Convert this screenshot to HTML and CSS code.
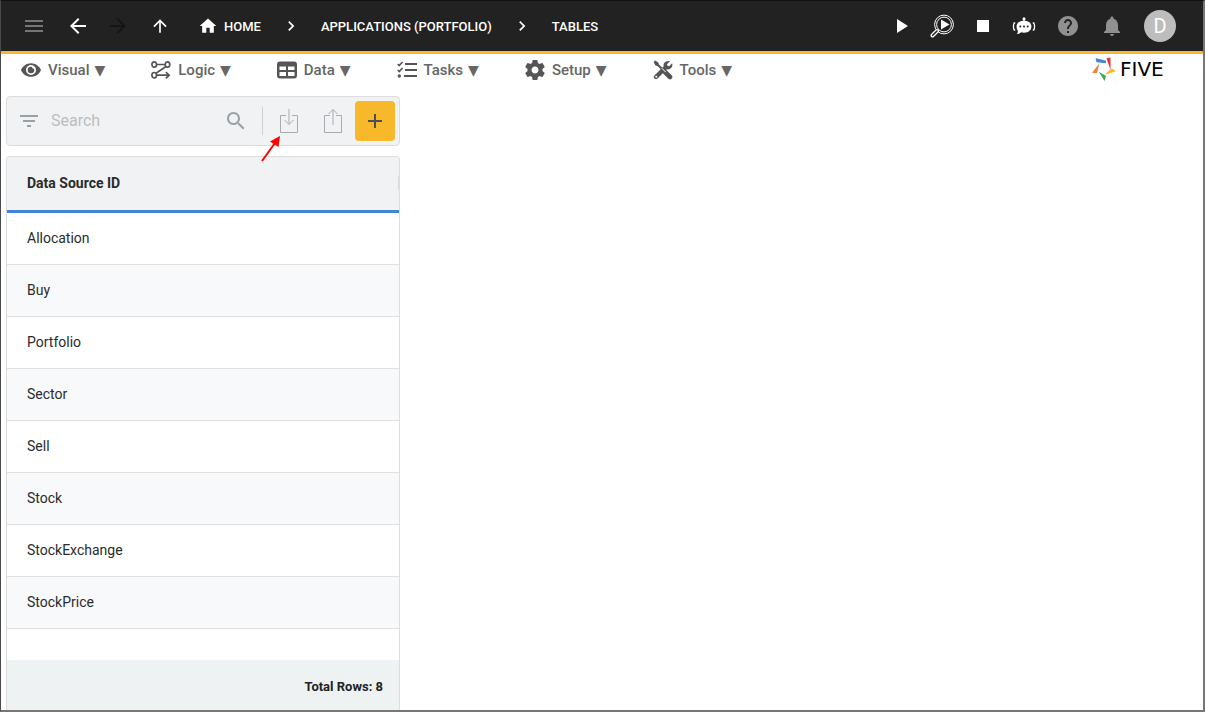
FILE: index.html
```html
<!DOCTYPE html>
<html lang="en">
<head>
<meta charset="utf-8">
<title>Tables</title>
<link rel="stylesheet" href="styles.css">
</head>
<body>
<div class="app">
  <header class="topbar">
    <div class="history">
      <button class="icon-btn muted" aria-label="Menu"><svg width="24" height="24" viewBox="0 0 24 24"><path d="M3 18h18v-2H3v2zm0-5h18v-2H3v2zm0-7v2h18V6H3z"/></svg></button>
      <button class="icon-btn" aria-label="Back"><svg width="24" height="24" viewBox="0 0 24 24"><path d="M20 11H7.830l5.590-5.590L12 4l-8 8 8 8 1.410-1.410L7.830 13H20v-2z"/></svg></button>
      <button class="icon-btn disabled" aria-label="Forward"><svg width="24" height="24" viewBox="0 0 24 24"><path d="M12 4l-1.410 1.410L16.170 11H4v2h12.170l-5.580 5.590L12 20l8-8z"/></svg></button>
      <button class="icon-btn" aria-label="Up"><svg width="20" height="20" viewBox="0 0 24 24"><path d="M4 12l1.410 1.410L11 7.830V20h2V7.830l5.580 5.590L20 12l-8-8-8 8z"/></svg></button>
    </div>
    <nav class="crumbs" aria-label="Breadcrumb">
      <a class="crumb" href="#"><svg width="20" height="20" viewBox="0 0 24 24"><path d="M10 20v-6h4v6h5v-8h3L12 3 2 12h3v8z"/></svg>HOME</a>
      <svg class="chevron" width="20" height="20" viewBox="0 0 24 24"><path d="M8.600 16.600l4.600-4.600-4.600-4.600L10 6l6 6-6 6z"/></svg>
      <a class="crumb" href="#">APPLICATIONS (PORTFOLIO)</a>
      <svg class="chevron" width="20" height="20" viewBox="0 0 24 24"><path d="M8.600 16.600l4.600-4.600-4.600-4.600L10 6l6 6-6 6z"/></svg>
      <a class="crumb" href="#">TABLES</a>
    </nav>
    <div class="actions">
      <button class="icon-btn play" aria-label="Run"><svg width="16" height="24" viewBox="4 0 16 24"><path d="M7 5v14l11-7z"/></svg></button>
      <button class="icon-btn" aria-label="Inspect"><svg width="24" height="24" viewBox="0 0 24 24"><g fill="none" stroke="#fff"><circle cx="14" cy="10.500" r="9.400" stroke-width="1"/><circle cx="14" cy="10.500" r="7.400" stroke-width="1"/><path d="M7 17l-4.500 4.500" stroke-width="4" stroke-linecap="round"/></g><path d="M7 17l-4.300 4.300" stroke="#222" stroke-width="1.600" stroke-linecap="round"/><path d="M11 5.500v10l8.500-5z"/></svg></button>
      <button class="icon-btn stop" aria-label="Stop"><svg width="12" height="12" viewBox="0 0 12 12"><path d="M0 0h12v12H0z"/></svg></button>
      <button class="icon-btn" aria-label="Assistant"><svg width="24" height="24" viewBox="0 0 24 24"><circle cx="12" cy="4.800" r="1.500"/><path d="M11.300 4h1.400v4h-1.400z"/><path d="M12 6.800c4.800 0 7.400 2.300 7.400 5.700s-2.600 6.200-7.400 6.200c-1 0-2-.1-2.900-.4-1 1-2.600 1.800-4.400 1.800.9-.9 1.200-2 1.200-3.200-.8-1.200-1.300-2.600-1.300-4.400 0-3.400 2.600-5.700 7.400-5.700z"/><path d="M3.200 9h-1c-1 1.500-1 5.500 0 7h1M20.800 9h1c1 1.500 1 5.500 0 7h-1" fill="none" stroke="#fff" stroke-width="1.300"/><g fill="#222"><circle cx="8.300" cy="12.600" r="1"/><circle cx="12" cy="12.600" r="1"/><circle cx="15.700" cy="12.600" r="1"/></g></svg></button>
      <button class="icon-btn gray" aria-label="Help"><svg width="24" height="24" viewBox="0 0 24 24"><path d="M12 2C6.480 2 2 6.480 2 12s4.480 10 10 10 10-4.480 10-10S17.520 2 12 2zm1 17h-2v-2h2v2zm2.070-7.750l-.9.920C13.450 12.900 13 13.500 13 15h-2v-.5c0-1.100.45-2.100 1.170-2.830l1.240-1.260c.37-.36.59-.86.59-1.410 0-1.100-.9-2-2-2s-2 .9-2 2H8c0-2.210 1.790-4 4-4s4 1.790 4 4c0 .88-.36 1.680-.93 2.250z"/></svg></button>
      <button class="icon-btn gray" aria-label="Notifications"><svg width="24" height="24" viewBox="0 0 24 24"><path d="M12 22c1.100 0 2-.9 2-2h-4c0 1.100.9 2 2 2zm6-6v-5c0-3.070-1.640-5.640-4.500-6.320V4c0-.83-.67-1.500-1.500-1.500s-1.500.67-1.500 1.500v.68C7.630 5.360 6 7.920 6 11v5l-2 2v1h16v-1l-2-2z"/></svg></button>
      <button class="avatar" aria-label="Account">D</button>
    </div>
  </header>

  <div class="menubar">
    <nav class="menus" aria-label="Main menu">
      <button class="menu"><svg width="20" height="20" viewBox="0 0 20 20"><path fill-rule="evenodd" d="M10 3.200C5.500 3.200 1.600 6 0 10c1.600 4 5.500 6.800 10 6.800s8.400-2.800 10-6.800c-1.600-4-5.500-6.800-10-6.800zM10 15a5 5 0 110-10 5 5 0 010 10z"/><path d="M10 6.700a3.300 3.300 0 103.300 3.300c0-.5-.1-1-.3-1.400a1.600 1.600 0 01-2-1.700c-.3-.1-.6-.2-1-.2z"/></svg>Visual <span>▼</span></button>
      <button class="menu"><svg width="20" height="20" viewBox="0 0 20 20"><g fill="none" stroke="currentColor" stroke-width="1.700"><ellipse cx="3.200" cy="4.500" rx="2.300" ry="2.700"/><ellipse cx="16.500" cy="4.500" rx="2.300" ry="2.700"/><ellipse cx="3.200" cy="15.200" rx="2.300" ry="2.700"/><path d="M5.500 4.500h8.700M15 6.500L5 13.300M5.500 15.200h12M14.800 12l3.400 3.200-3.400 3.200"/></g></svg>Logic <span>▼</span></button>
      <button class="menu"><svg width="20" height="20" viewBox="0 0 20 20"><path fill-rule="evenodd" d="M3 1.500h14a3 3 0 013 3v11a3 3 0 01-3 3H3a3 3 0 01-3-3v-11a3 3 0 013-3zM2.500 6.500v3.500H9V6.500zm8.500 0V10h6.500V6.500zM2.500 12v4H9v-4zm8.500 0v4h6.500v-4z"/></svg>Data <span>▼</span></button>
      <button class="menu"><svg width="20" height="20" viewBox="0 0 20 20"><path d="M8 3h12v2H8zm0 6h12v2H8zm-1 6h13v2H7z"/><path d="M.7 4l1.500 1.500L5.500 2M.7 10l1.500 1.500L5.500 8" fill="none" stroke="currentColor" stroke-width="1.600"/><circle cx="2.300" cy="16" r="1.700"/></svg>Tasks <span>▼</span></button>
      <button class="menu"><svg width="20" height="20" viewBox="2 2 20 20"><path d="M19.430 12.980c.04-.32.07-.64.07-.98s-.03-.66-.07-.98l2.110-1.650c.19-.15.24-.42.12-.64l-2-3.460c-.12-.22-.39-.3-.61-.22l-2.490 1c-.52-.4-1.080-.73-1.690-.98l-.38-2.650C14.460 2.180 14.250 2 14 2h-4c-.25 0-.46.18-.49.42l-.38 2.650c-.61.25-1.170.59-1.690.98l-2.490-1c-.23-.09-.49 0-.61.22l-2 3.460c-.13.22-.07.49.12.64l2.110 1.650c-.04.32-.07.65-.07.98s.03.66.07.98l-2.110 1.650c-.19.15-.24.42-.12.64l2 3.460c.12.22.39.3.61.22l2.490-1c.52.4 1.080.73 1.690.98l.38 2.650c.03.24.24.42.49.42h4c.25 0 .46-.18.49-.42l.38-2.650c.61-.25 1.170-.59 1.690-.98l2.490 1c.23.09.49 0 .61-.22l2-3.460c.12-.22.07-.49-.12-.64l-2.110-1.650zM12 15.500c-1.930 0-3.500-1.570-3.500-3.500s1.570-3.500 3.500-3.500 3.500 1.570 3.500 3.500-1.570 3.500-3.500 3.500z"/></svg>Setup <span>▼</span></button>
      <button class="menu"><svg width="20" height="20" viewBox="0 0 20 20"><path d="M2.200 2.200L10 10" stroke="currentColor" stroke-width="2.200"/><path d="M.6 2L2 .6l3.400 1.900.5 2.200-1.200 1.200-2.200-.5z"/><path d="M11.500 11.500l5.500 5.500" stroke="currentColor" stroke-width="4.600" stroke-linecap="round"/><path d="M3 17l8.500-8.500" stroke="currentColor" stroke-width="4.400" stroke-linecap="round"/><path d="M17 1.200l-3 3 .5 1.600 1.600.5 3-3c1.200 3.500-1.200 6.300-4.400 6.100-3.500-.1-5.300-3.700-3.500-6.500C12.500 1.200 14.700.5 17 1.200z"/><path d="M8.800 8.200l4 4" stroke="#fff" stroke-width="1"/><circle cx="3.300" cy="16.700" r="1" fill="#fff"/></svg>Tools <span>▼</span></button>
    </nav>
    <div class="brand">
      <svg width="24" height="24" viewBox="0 0 24 24"><path fill="#3f86db" d="M3.500 1L14 3.700v2.500L4.500 5.200z"/><path fill="#e5333a" d="M14.500 1.300L18.500.5V13z"/><path fill="#fbb829" d="M19.800 11.200L24 14.200 12 18z"/><path fill="#3aa757" d="M6.800 14.700L14 19l-1.500 5z"/><path fill="#f57f32" d="M7.500 6L5 16H0z"/></svg>
      <span class="brand-name">FIVE</span>
    </div>
  </div>

  <main class="workspace">
    <section class="panel">
      <form class="search">
        <svg class="filter" width="24" height="24" viewBox="0 0 24 24"><path d="M10 18h4v-2h-4v2zM3 6v2h18V6H3zm3 7h12v-2H6v2z"/></svg>
        <input class="search-input" type="text" placeholder="Search" aria-label="Search">
        <button class="tool" type="button" aria-label="Find"><svg width="24" height="24" viewBox="0 0 24 24"><path d="M15.500 14h-.79l-.28-.27C15.410 12.590 16 11.110 16 9.500 16 5.910 13.090 3 9.500 3S3 5.910 3 9.500 5.910 16 9.500 16c1.610 0 3.090-.59 4.230-1.570l.27.28v.79l5 4.990L20.490 19l-4.990-5zm-6 0C7.010 14 5 11.990 5 9.500S7.010 5 9.500 5 14 7.010 14 9.500 11.990 14 9.500 14z"/></svg></button>
        <span class="divider"></span>
        <button class="tool import" type="button" aria-label="Import"><svg width="20" height="26" viewBox="0 0 20 26"><g fill="none" stroke="#a5adb3"><path d="M7 7.500H1.500v17h17v-17H13"/><path d="M10 1v15M5.500 12l4.500 4.500 4.500-4.500"/></g></svg>
          <svg class="pointer" width="22" height="28" viewBox="0 0 22 28"><path d="M2 26L15 8" stroke="#f00" stroke-width="2"/><path fill="#f00" d="M20 1L10 6.500l8.500 5.500z"/></svg></button>
        <button class="tool" type="button" aria-label="Export"><svg width="20" height="26" viewBox="0 0 20 26"><g fill="none" stroke="#a5adb3"><path d="M7 7.500H1.500v17h17v-17H13"/><path d="M10 17V1.500M5.500 6L10 1.500 14.500 6"/></g></svg></button>
        <button class="add" type="button" aria-label="Add"><svg width="14" height="14" viewBox="0 0 14 14"><path d="M6 0h2v6h6v2H8v6H6V8H0V6h6z"/></svg></button>
      </form>

      <div class="list">
        <table class="grid">
          <thead><tr><th scope="col"><div class="head-cell">Data Source ID<span class="resize"></span></div></th></tr></thead>
          <tbody>
            <tr><td>Allocation</td></tr>
            <tr><td>Buy</td></tr>
            <tr><td>Portfolio</td></tr>
            <tr><td>Sector</td></tr>
            <tr><td>Sell</td></tr>
            <tr><td>Stock</td></tr>
            <tr><td>StockExchange</td></tr>
            <tr><td>StockPrice</td></tr>
          </tbody>
        </table>
        <footer class="total">Total Rows: 8</footer>
      </div>
    </section>
  </main>
</div>
</body>
</html>
```
FILE: styles.css
```css
* { box-sizing: border-box; }

body {
  margin: 0;
  font-family: Roboto, "DejaVu Sans", sans-serif;
  font-size: 14px;
  color: #2b2b2b;
  background: #fff;
}

button {
  margin: 0;
  padding: 0;
  border: 0;
  background: none;
  font: inherit;
  color: inherit;
}

svg { display: block; flex: none; fill: currentColor; }

.app {
  display: flex;
  flex-direction: column;
  min-height: 100vh;
  border: 1px solid #4a4a4a;
  border-top-color: #111;
  border-right: 2px solid #777;
  border-bottom: 2px solid #777;
}

.topbar {
  display: flex;
  align-items: center;
  height: 53px;
  padding: 0 27px 0 21px;
  background: #222;
  border-bottom: 3px solid #f7b82b;
  color: #fff;
}

.history { display: flex; align-items: center; gap: 20px; }

.icon-btn { display: flex; align-items: center; justify-content: center; }
.icon-btn.muted { color: #767676; }
.icon-btn.disabled { margin-left: -4px; color: #151515; }
.icon-btn.gray { color: #909090; }

.crumbs {
  display: flex;
  flex: 1;
  align-items: center;
  gap: 20px;
  margin-left: 28px;
  font-size: 13px;
  font-weight: 500;
}

.crumb {
  display: flex;
  align-items: center;
  gap: 6px;
  color: #fff;
  text-decoration: none;
}

.actions { display: flex; align-items: center; gap: 20px; }
.actions .stop { width: 18px; }

.avatar {
  width: 32px;
  height: 32px;
  border-radius: 50%;
  background: #bdbdbd;
  color: #fff;
  font-size: 20px;
}

.menubar {
  display: flex;
  align-items: center;
  justify-content: space-between;
  height: 32px;
  padding: 0 24px 0 20px;
}

.menus { display: flex; gap: 46px; }

.menu {
  display: flex;
  align-items: center;
  gap: 5px;
  font-size: 15px;
  font-weight: 500;
  color: #666;
}

.menu svg { margin-right: 2px; color: #555; }
.menu span { font-size: 14px; }

.brand { display: flex; align-items: center; gap: 4px; height: 28px; padding-bottom: 3px; }

.brand-name {
  min-width: 59px;
  font-family: "DejaVu Sans", sans-serif;
  font-size: 20px;
  line-height: 20px;
  color: #000;
}

.workspace { display: flex; flex: 1; padding: 10px 5px 0; }

.panel { display: flex; flex-direction: column; gap: 10px; width: 394px; }

.search {
  display: flex;
  align-items: center;
  height: 50px;
  padding: 0 4px 0 10px;
  border: 1px solid #ddd;
  border-radius: 4px;
  background: #f1f2f4;
  color: #98a1a8;
}

.search-input {
  flex: 1;
  min-width: 0;
  margin-left: 10px;
  padding: 0 0 2px;
  border: 0;
  outline: 0;
  background: none;
  font: inherit;
  font-size: 16px;
}

.search-input::placeholder { color: #bcbec0; opacity: 1; }

.tool { position: relative; margin-right: 12px; }
.tool + .tool { margin: 0 12px; }

.divider { width: 1px; height: 28px; margin: 0 16px 0 2px; background: #cfd1d3; }

/* Callout arrow aimed at the import button. */
.pointer { position: absolute; top: 27px; right: 17px; }

.add {
  display: flex;
  align-items: center;
  justify-content: center;
  width: 40px;
  height: 40px;
  border-radius: 4px;
  background: #f7b82b;
  color: #4f4f4f;
}

.list {
  display: flex;
  flex: 1;
  flex-direction: column;
  justify-content: space-between;
  border: 1px solid #ddd;
  border-bottom: 0;
  border-radius: 4px 4px 0 0;
}

.grid { width: 100%; border-collapse: separate; border-spacing: 0; }

.grid th {
  height: 56px;
  padding: 0 0 2px 20px;
  border-bottom: 3px solid #4285d6;
  border-radius: 4px 4px 0 0;
  background: #f1f2f4;
  font-weight: 700;
  text-align: left;
}

.head-cell { display: flex; align-items: center; justify-content: space-between; }
.resize { width: 1px; height: 14px; background: #d8dadc; }

.grid td {
  height: 52px;
  padding: 0 20px 2px;
  border-bottom: 1px solid #e0e0e0;
}

.grid tbody tr:nth-child(even) { background: #f8f9fb; }

.total {
  height: 50px;
  padding: 2px 16px 0;
  background: #eef2f3;
  font-size: 13px;
  font-weight: 700;
  line-height: 50px;
  text-align: right;
  color: #222;
}
```
